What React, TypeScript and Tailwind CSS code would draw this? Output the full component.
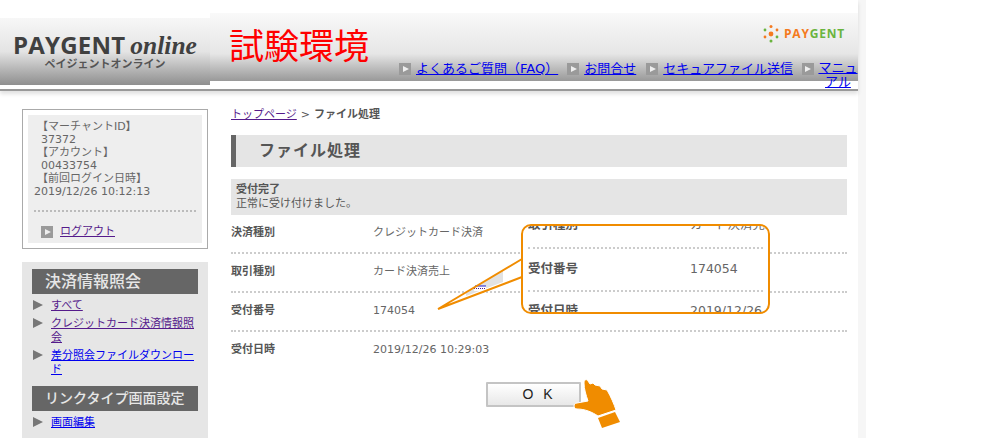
const FONT = "font-['DejaVu_Sans','Noto_Sans_CJK_JP',sans-serif]";

function PlayIcon({ className = '' }: { className?: string }) {
  return (
    <span className={`flex h-3 w-3 shrink-0 items-center justify-center bg-[#9a9a9a] ${className}`}>
      <span className="ml-px border-y-[3.5px] border-l-[6px] border-y-transparent border-l-[#eee]" />
    </span>
  );
}

function NavLink({ label }: { label: string }) {
  return (
    <div className="flex items-center gap-[5px]">
      <PlayIcon />
      <a href="#" className="whitespace-nowrap text-[13px] leading-[16px] text-[#0000ee] underline">{label}</a>
    </div>
  );
}

function SideLink({ label, visited, wrap }: { label: string; visited?: boolean; wrap?: boolean }) {
  return (
    <div className="flex gap-[8px]">
      <span className="mt-[1px] h-0 w-0 shrink-0 border-y-[5px] border-l-[10px] border-y-transparent border-l-[#777]" />
      <a
        href="#"
        className={`block w-[146px] text-[11px] leading-[14px] underline ${wrap ? '' : 'whitespace-nowrap'} ${visited ? 'text-[#551a8b]' : 'text-[#0000ee]'}`}
      >
        {label}
      </a>
    </div>
  );
}

function Row({ label, value, last }: { label: string; value: string; last?: boolean }) {
  return (
    <div className={`flex h-[39px] items-center border-b-2 border-dotted pb-px text-[11px] ${last ? 'border-transparent' : 'border-[#ccc]'}`}>
      <div className="w-[142px] font-bold text-[#555]">{label}</div>
      <div className="text-[#666]">{value}</div>
    </div>
  );
}

function Callout() {
  return (
    <>
      <svg className="absolute left-[436px] top-[255px]" width="90" height="58" viewBox="0 0 90 58">
        <path d="M2 54 L86 4 L86 22 Z" fill="#fff" />
        <path d="M30 37 L67 15 L67 27 L30 41 Z" fill="#e2e2e2" />
        <path d="M38 31 H50 V36 H38 Z" fill="#fff" />
        <path d="M39 31 H50" stroke="#1a1ad0" strokeWidth="1" />
        <path d="M38 33.5 H50" stroke="#551a8b" strokeWidth="1" strokeDasharray="1 1" />
        <path d="M2 54 L86 4 M2 54 L86 22" stroke="#f08c00" strokeWidth="2" fill="none" />
      </svg>
      <div className="absolute left-[521px] top-[224px] h-[90px] w-[249px] overflow-hidden rounded-[10px] border-2 border-[#f08c00] bg-white text-[12.5px] whitespace-nowrap">
        <div className="-mt-[15px] px-[5px]">
          <div className="flex h-[38px] items-start border-b-2 border-dotted border-[#ccc] pt-[5px]">
            <div className="w-[162px] shrink-0 font-bold text-[#555]">取引種別</div>
            <div className="text-[#666]">カード決済売上</div>
          </div>
          <div className="flex h-[43px] items-center border-b-2 border-dotted border-[#ccc]">
            <div className="w-[162px] shrink-0 font-bold text-[#555]">受付番号</div>
            <div className="text-[#666]">174054</div>
          </div>
          <div className="flex h-[38px] items-center">
            <div className="w-[162px] shrink-0 font-bold text-[#555]">受付日時</div>
            <div className="text-[#666]">2019/12/26 10:29:03</div>
          </div>
        </div>
      </div>
    </>
  );
}

function Hand() {
  return (
    <svg className="absolute left-[572px] top-[376px]" width="50" height="56" viewBox="0 0 50 56">
      <path
        d="M12 7 C12 3 15 3 16 5 L18 8 L21 7 L23 9 L28 10 L30 13 L35 14 C39 21 42 28 44 34 L26 40 C20 36 13 33 5 33 C1 33 1 27 5 27 L16 25 C14 19 12 13 12 7 Z"
        fill="#f08c00"
        stroke="#fff"
        strokeWidth="1"
      />
      <path d="M26 42 L43 36 L48 46 L30 52 Z" fill="#f08c00" />
    </svg>
  );
}

export default function App() {
  return (
    <div className={`relative h-[438px] w-[1000px] overflow-hidden bg-white ${FONT}`}>
      <div className="h-full w-[866px] border-r-[8px] border-[#f6f6f6]">
        {/* Header */}
        <header className="h-[91px] border-b-2 border-[#999] shadow-[0_3px_4px_rgba(0,0,0,0.12)]">
          <div className="flex">
            <div className="mt-[18px] flex h-[67px] w-[210px] shrink-0 flex-col items-center bg-gradient-to-b from-[#f7f7f7] via-[#e4e4e4] to-[#8f8f8f] pt-[15px]">
              <div className="flex items-baseline gap-[5px] leading-[24px]">
                <span className="font-['Open_Sans',sans-serif] text-[24px] font-bold tracking-[0.2px] text-[#404040]">PAYGENT</span>
                <span className="font-['Liberation_Serif',serif] text-[25.5px] font-bold italic text-[#404040]">online</span>
              </div>
              <div className="text-[11px] font-bold leading-[14px] text-[#555]">ペイジェントオンライン</div>
            </div>
            <div className="relative mt-[13px] h-[68px] w-[648px] shrink-0 bg-gradient-to-b from-[#f9f9f9] via-[#e6e6e6] via-60% to-[#999]">
              <div className="flex h-[48px] items-start justify-between pt-[9px]">
                <div className="pl-[19px] font-['Noto_Sans_CJK_JP',sans-serif] text-[35px] leading-[44px] text-[#ff0000]">試験環境</div>
                <div className="mr-[13px] mt-[2px] flex items-center gap-[5px]">
                  <svg width="16" height="20" viewBox="0 0 16 20">
                    <circle cx="8" cy="2.5" r="1.5" fill="#f47a20" />
                    <circle cx="2" cy="6" r="1.4" fill="#6ab43e" />
                    <circle cx="14" cy="6" r="1.4" fill="#f47a20" />
                    <circle cx="8" cy="10" r="2.4" fill="#f47a20" />
                    <circle cx="2" cy="13" r="1.4" fill="#f47a20" />
                    <circle cx="14" cy="13" r="1.4" fill="#6ab43e" />
                    <circle cx="8" cy="17" r="1.5" fill="#6ab43e" />
                  </svg>
                  <span className="font-['Open_Sans',sans-serif] text-[12px] font-bold tracking-[0.8px]">
                    <span className="text-[#f47a20]">PAY</span>
                    <span className="text-[#6ab43e]">GENT</span>
                  </span>
                </div>
              </div>
              <nav className="flex items-start pl-[189px]">
                <NavLink label="よくあるご質問（FAQ）" />
                <div className="w-[9px]" />
                <NavLink label="お問合せ" />
                <div className="w-[10px]" />
                <NavLink label="セキュアファイル送信" />
                <div className="flex w-[65px] shrink-0 items-start gap-[4px] pl-[9px]">
                  <PlayIcon className="mt-[2px]" />
                  <a href="#" className="w-[40px] shrink-0 text-center text-[13px] leading-[14px] text-[#0000ee] underline">マニュアル</a>
                </div>
              </nav>
            </div>
          </div>
        </header>

        {/* Body */}
        <div className="flex">
          <aside className="ml-[22px] w-[186px] shrink-0 pt-[18px]">
            <div className="border border-[#aaa] p-[5px]">
              <div className="h-[128px] bg-[#eee] px-[6px] pt-[5px] text-[11px] leading-[13px] text-[#666]">
                <div className="pl-[3px]">【マーチャントID】</div>
                <div className="pl-[7px]">37372</div>
                <div className="pl-[3px]">【アカウント】</div>
                <div className="pl-[7px]">00433754</div>
                <div className="pl-[3px]">【前回ログイン日時】</div>
                <div>2019/12/26 10:12:13</div>
                <div className="mt-[12px] border-t-2 border-dotted border-[#bbb]" />
                <div className="mt-[13px] flex items-center gap-[7px] pl-[7px]">
                  <PlayIcon />
                  <a href="#" className="text-[11px] text-[#551a8b] underline">ログアウト</a>
                </div>
              </div>
            </div>
            <div className="mt-[13px] h-[176px] bg-[#e6e6e6] px-[10px] pt-[7px]">
              <div className="flex h-[25px] items-center bg-[#666] pl-[13px] text-[16px] font-medium text-[#e6e6e6]">決済情報照会</div>
              <div className="mt-[5px] flex flex-col gap-[4px] pl-px">
                <SideLink label="すべて" visited />
                <SideLink label="クレジットカード決済情報照会" visited wrap />
                <SideLink label="差分照会ファイルダウンロード" wrap />
              </div>
              <div className="mt-[9px] flex h-[25px] items-center bg-[#666] pl-[13px] text-[14px] font-medium text-[#e6e6e6]">リンクタイプ画面設定</div>
              <div className="mt-[5px] pl-px">
                <SideLink label="画面編集" />
              </div>
            </div>
          </aside>

          <main className="ml-[23px] w-[616px] pt-[17px]">
            <div className="flex h-[14px] items-center text-[11px]">
              <a href="#" className="text-[#551a8b] underline">トップページ</a>
              <span className="ml-[4px] text-[#555]">&gt;</span>
              <span className="ml-[4px] font-bold text-[#555]">ファイル処理</span>
            </div>
            <h1 className="mt-[13px] flex h-[32px] items-center border-l-[5px] border-[#666] bg-[#e5e5e5] pl-[23px] text-[16px] font-bold tracking-[1px] text-[#555]">
              ファイル処理
            </h1>
            <div className="mt-[12px] h-[36px] bg-[#e5e5e5] px-[5px] pt-[4px] text-[11px] leading-[14px] text-[#555]">
              <div className="font-bold">受付完了</div>
              <div>正常に受け付けました。</div>
            </div>
            <div>
              <Row label="決済種別" value="クレジットカード決済" />
              <Row label="取引種別" value="カード決済売上" />
              <Row label="受付番号" value="174054" />
              <Row label="受付日時" value="2019/12/26 10:29:03" last />
            </div>
            <div className="mt-[11px] flex justify-center pr-[12px]">
              <button className="h-[25px] w-[95px] rounded-[1px] border-2 border-[#c4c4c4] bg-gradient-to-b from-white to-[#e8e8e8] pl-[12px] font-['Liberation_Sans',sans-serif] text-[14px] tracking-[3px] text-[#222]">
                O K
              </button>
            </div>
          </main>
        </div>
      </div>
      <Callout />
      <Hand />
    </div>
  );
}
